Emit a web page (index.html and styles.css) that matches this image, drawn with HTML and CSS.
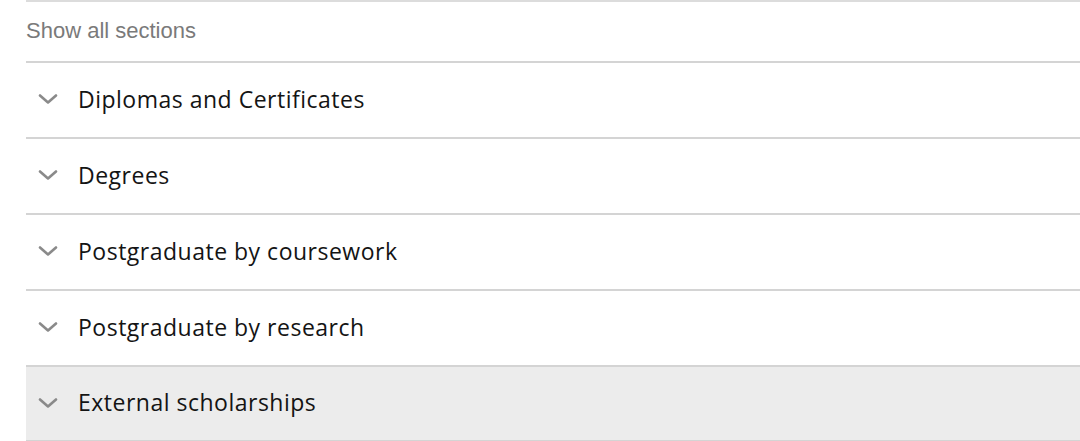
FILE: index.html
```html
<!DOCTYPE html>
<html lang="en">
<head>
<meta charset="utf-8">
<link rel="stylesheet" href="styles.css">
</head>
<body>
<div class="accordion">
  <div class="show-all">Show all sections</div>
  <div class="item">
    <svg class="chev" viewBox="0 0 20 10" width="20" height="10"><path d="M2 1.5 L10 8.5 L18 1.5" fill="none" stroke="#8a8a8a" stroke-width="2.6" stroke-linecap="round" stroke-linejoin="round"/></svg>
    <span class="title">Diplomas and Certificates</span>
  </div>
  <div class="item">
    <svg class="chev" viewBox="0 0 20 10" width="20" height="10"><path d="M2 1.5 L10 8.5 L18 1.5" fill="none" stroke="#8a8a8a" stroke-width="2.6" stroke-linecap="round" stroke-linejoin="round"/></svg>
    <span class="title">Degrees</span>
  </div>
  <div class="item">
    <svg class="chev" viewBox="0 0 20 10" width="20" height="10"><path d="M2 1.5 L10 8.5 L18 1.5" fill="none" stroke="#8a8a8a" stroke-width="2.6" stroke-linecap="round" stroke-linejoin="round"/></svg>
    <span class="title">Postgraduate by coursework</span>
  </div>
  <div class="item">
    <svg class="chev" viewBox="0 0 20 10" width="20" height="10"><path d="M2 1.5 L10 8.5 L18 1.5" fill="none" stroke="#8a8a8a" stroke-width="2.6" stroke-linecap="round" stroke-linejoin="round"/></svg>
    <span class="title">Postgraduate by research</span>
  </div>
  <div class="item item-active">
    <svg class="chev" viewBox="0 0 20 10" width="20" height="10"><path d="M2 1.5 L10 8.5 L18 1.5" fill="none" stroke="#8a8a8a" stroke-width="2.6" stroke-linecap="round" stroke-linejoin="round"/></svg>
    <span class="title">External scholarships</span>
  </div>
</div>
</body>
</html>
```
FILE: styles.css
```css
html, body {
  margin: 0;
  padding: 0;
  background: #ffffff;
}
.accordion {
  margin-left: 26px;
  border-top: 2px solid #dcdcdc;
  border-bottom: 2px solid #d4d4d4;
}
.show-all {
  height: 59px;
  display: flex;
  align-items: center;
  font-family: "Liberation Sans", Arial, sans-serif;
  font-size: 22px;
  color: #7a7a7a;
  padding-bottom: 2px;
  box-sizing: border-box;
}
.item {
  height: 76px;
  box-sizing: border-box;
  border-top: 2px solid #d4d4d4;
  display: flex;
  align-items: center;
  padding-left: 12px;
  padding-bottom: 3px;
}
.item-active {
  background: #ececec;
  height: 75px;
}
.chev {
  flex: none;
  margin-right: 20px;
  margin-top: 1px;
}
.title {
  font-family: "Open Sans", Lato, sans-serif;
  font-size: 23px;
  letter-spacing: 0.5px;
  color: #141414;
}
```
